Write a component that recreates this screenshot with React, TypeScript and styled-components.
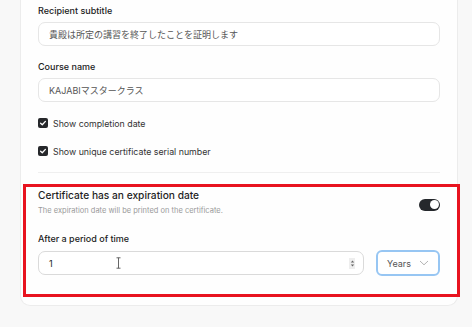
import React, { FC, ReactElement } from 'react'
import styled, { createGlobalStyle } from 'styled-components'

const GlobalStyle = createGlobalStyle`
  html, body {
    margin: 0;
    padding: 0;
    background: #f8f8f8;
    font-family: Inter, 'Noto Sans CJK JP', sans-serif;
    color: #222;
  }
`

const Page = styled.div`
  padding: 0 14px 0 20px;
`

const Card = styled.div`
  background: #fefefe;
  border: 1px solid #ececec;
  border-top: none;
  border-radius: 0 0 10px 10px;
  padding: 5px 17px 8px 17px;
`

const Label = styled.div`
  font-size: 9px;
  line-height: 12px;
  font-weight: 500;
  color: #222;
  margin-bottom: 5px;
`

const Field = styled.div<{ $gap?: number }>`
  margin-bottom: ${props => props.$gap ?? 15}px;
`

const TextBox = styled.div`
  height: 24px;
  box-sizing: border-box;
  border: 1px solid #e6e6e6;
  border-radius: 7px;
  background: #fff;
  display: flex;
  align-items: center;
  padding: 0 10px;
  font-size: 9px;
  color: #555;
`

const CheckRow = styled.label`
  display: flex;
  align-items: center;
  gap: 5px;
  height: 14px;
  font-size: 8.8px;
  color: #333;
  margin-bottom: 14px;
`

const Box = styled.span`
  width: 10px;
  height: 10px;
  border-radius: 2px;
  background: #26282b;
  display: inline-flex;
  align-items: center;
  justify-content: center;
`

const Divider = styled.div`
  height: 1px;
  background: #efefef;
  margin: 0 0 11px;
`

const Highlight = styled.section`
  border: 3px solid #e8131f;
  margin: 0 -20px 0 -15px;
  padding: 1px 17px 18px 12px;
`

const HeadRow = styled.div`
  display: flex;
  align-items: center;
  justify-content: space-between;
  margin-bottom: 17px;
`

const Heading = styled.div`
  font-size: 10.2px;
  line-height: 14px;
  font-weight: 500;
  color: #1f1f1f;
`

const Sub = styled.div`
  font-size: 7.5px;
  line-height: 11px;
  color: #9a9a9a;
  margin-top: 3px;
`

const Toggle = styled.div`
  width: 21px;
  height: 12px;
  border-radius: 6px;
  background: #25282c;
  position: relative;
  margin-top: 5px;
  &::after {
    content: '';
    position: absolute;
    right: 1.5px;
    top: 1.5px;
    width: 9px;
    height: 9px;
    border-radius: 50%;
    background: #fff;
  }
`

const PeriodRow = styled.div`
  display: flex;
  align-items: center;
  gap: 12px;
`

const NumberBox = styled(TextBox)`
  flex: 1;
  position: relative;
  border-color: #dadada;
  color: #222;
  justify-content: space-between;
  padding: 0 8px 0 10px;
`

const Cursor = styled.svg`
  position: absolute;
  left: 77px;
  top: 5px;
`

const Spinner = styled.span`
  width: 6px;
  height: 11px;
  background: #eee;
  display: inline-flex;
  align-items: center;
  justify-content: center;
`

const Select = styled.div`
  width: 64px;
  height: 26px;
  box-sizing: border-box;
  border: 2px solid #97c6f3;
  border-radius: 6px;
  background: #fff;
  display: flex;
  align-items: center;
  justify-content: space-between;
  padding: 0 9px 0 9px;
  font-size: 9px;
  color: #555;
`

const Check: FC = (): ReactElement => (
    <svg width="8" height="8" viewBox="0 0 8 8">
        <path d="M1.6 4.2 L3.3 5.8 L6.4 2.4" fill="none" stroke="#fff" strokeWidth="1.3" strokeLinecap="round" strokeLinejoin="round" />
    </svg>
)

const App: FC = (): ReactElement => {
    return (
        <Page>
            <GlobalStyle />
            <Card>
                <Field>
                    <Label>Recipient subtitle</Label>
                    <TextBox>貴殿は所定の講習を終了したことを証明します</TextBox>
                </Field>
                <Field $gap={14}>
                    <Label>Course name</Label>
                    <TextBox>KAJABIマスタークラス</TextBox>
                </Field>
                <CheckRow><Box><Check /></Box>Show completion date</CheckRow>
                <CheckRow><Box><Check /></Box>Show unique certificate serial number</CheckRow>
                <Divider />
                <Highlight>
                    <HeadRow>
                        <div>
                            <Heading>Certificate has an expiration date</Heading>
                            <Sub>The expiration date will be printed on the certificate.</Sub>
                        </div>
                        <Toggle />
                    </HeadRow>
                    <Label>After a period of time</Label>
                    <PeriodRow>
                        <NumberBox>
                            <span>1</span>
                            <Cursor width="5" height="12" viewBox="0 0 5 12">
                                <path d="M0.5 0.8 H4.5 M2.5 0.8 V11.2 M0.5 11.2 H4.5" stroke="#555" strokeWidth="0.9" fill="none" />
                            </Cursor>
                            <Spinner>
                                <svg width="5" height="9" viewBox="0 0 5 9">
                                    <path d="M0.8 3.4 L2.5 1.4 L4.2 3.4 Z M0.8 5.6 L2.5 7.6 L4.2 5.6 Z" fill="#666" />
                                </svg>
                            </Spinner>
                        </NumberBox>
                        <Select>
                            <span>Years</span>
                            <svg width="10" height="6" viewBox="0 0 10 6">
                                <path d="M1 1 L5 4.8 L9 1" fill="none" stroke="#aaa" strokeWidth="0.9" />
                            </svg>
                        </Select>
                    </PeriodRow>
                </Highlight>
            </Card>
        </Page>
    )
}

export default App
